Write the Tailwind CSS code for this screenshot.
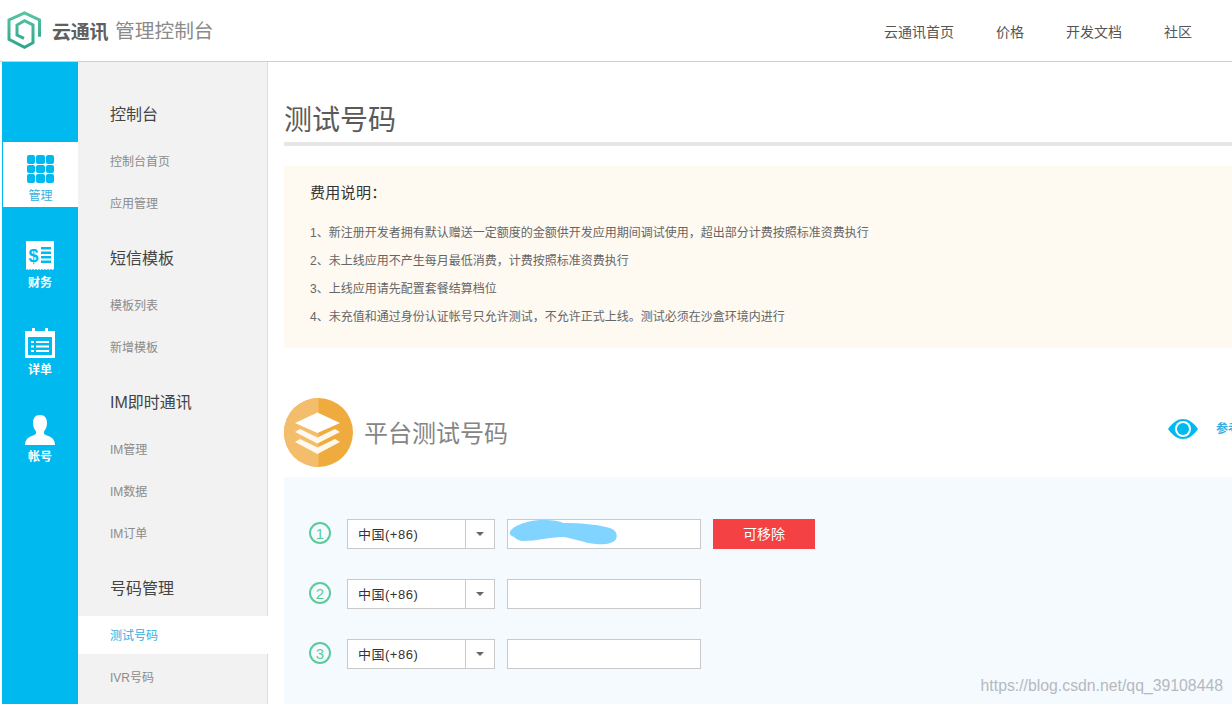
<!DOCTYPE html>
<html lang="zh-CN">
<head>
  <meta charset="UTF-8">
  <title>测试号码</title>
  <script src="https://cdn.jsdelivr.net/npm/@tailwindcss/browser@4"></script>
</head>
<body class="h-[704px] w-[1232px] overflow-hidden bg-white font-['Liberation_Sans','Noto_Sans_CJK_SC',sans-serif]">
  <!-- Header -->
  <header class="flex h-[62px] items-center justify-between border-b border-[#cfcfcf] pr-[40px]">
    <div class="flex items-center pl-[7px]">
      <svg class="h-[40px] w-[34px]" viewBox="0 0 34 40" fill="none">
        <defs><linearGradient id="lg" x1="0" y1="0" x2="0" y2="1"><stop offset="0" stop-color="#55c4a2"/><stop offset="1" stop-color="#2fa58c"/></linearGradient></defs>
        <path d="M32.500 25.700V9L17.500 2 2 9V28.300L17.500 36.300 26 31.700V14L17.500 9.700 10 14V24L17 27.300" stroke="url(#lg)" stroke-width="3"/>
      </svg>
      <span class="ml-[11px] pt-[3px] text-[19px] leading-none font-bold tracking-[-0.3px] text-[#5f5f5f]">云通讯</span>
      <span class="ml-[7px] pt-[3px] text-[19.700px] leading-none text-[#8a8a8a]">管理控制台</span>
    </div>
    <nav class="flex gap-[42px] pt-[3px] text-[14px] text-[#555]">
      <a>云通讯首页</a>
      <a>价格</a>
      <a>开发文档</a>
      <a>社区</a>
    </nav>
  </header>

  <div class="flex h-[642px]">
    <!-- Icon rail -->
    <aside class="ml-[2px] w-[76px] shrink-0 bg-[#00b9ef] pt-[80px] text-center text-[12px] font-bold text-white">
      <div class="flex h-[65px] flex-col items-center border-l border-[#00b9ef] bg-white pt-[13px] font-normal text-[#35aee2]">
        <div class="grid grid-cols-3 gap-[1px]">
          <i class="h-[8.500px] w-[8.500px] rounded-[2px] bg-[#00b9ef]"></i><i class="h-[8.500px] w-[8.500px] rounded-[2px] bg-[#00b9ef]"></i><i class="h-[8.500px] w-[8.500px] rounded-[2px] bg-[#00b9ef]"></i>
          <i class="h-[8.500px] w-[8.500px] rounded-[2px] bg-[#00b9ef]"></i><i class="h-[8.500px] w-[8.500px] rounded-[2px] bg-[#00b9ef]"></i><i class="h-[8.500px] w-[8.500px] rounded-[2px] bg-[#00b9ef]"></i>
          <i class="h-[8.500px] w-[8.500px] rounded-[2px] bg-[#00b9ef]"></i><i class="h-[8.500px] w-[8.500px] rounded-[2px] bg-[#00b9ef]"></i><i class="h-[8.500px] w-[8.500px] rounded-[2px] bg-[#00b9ef]"></i>
        </div>
        <span class="mt-[4px] leading-[18px]">管理</span>
      </div>
      <div class="mt-[31px] flex h-[87px] flex-col items-center pt-[3px]">
        <svg class="h-[29px] w-[28px]" viewBox="0 0 28 29">
          <path d="M0 1 Q0 0 1 0 H27 Q28 0 28 1 V28 L26.500 29 L25 28 L23.500 29 L22 28 L20.500 29 L19 28 L17.500 29 L16 28 L14.500 29 L13 28 L11.500 29 L10 28 L8.500 29 L7 28 L5.500 29 L4 28 L2.500 29 L1 28 L0 29 Z" fill="#fff"/>
          <path d="M15 6h10v2.400H15zM15 10.500h10v2.400H15zM15 15h10v2.400H15zM15 19.500h10v2.400H15z" fill="#00b9ef"/>
          <text x="7.500" y="21" text-anchor="middle" font-size="18" font-weight="700" fill="#00b9ef" font-family="Liberation Sans">$</text>
        </svg>
        <span class="mt-[4px] leading-[18px]">财务</span>
      </div>
      <div class="flex h-[87px] flex-col items-center pt-[3px]">
        <svg class="h-[30px] w-[30px]" viewBox="0 0 30 30" fill="none">
          <path d="M1.500 5h27v23.500h-27z" stroke="#fff" stroke-width="3"/>
          <path d="M0 3h30v6H0z" fill="#fff"/>
          <path d="M7 0h3v5H7zM20 0h3v5h-3z" fill="#fff"/>
          <path d="M6 13h3v2H6zM11 13h13v2H11zM6 17.500h3v2H6zM11 17.500h13v2H11zM6 22h3v2H6zM11 22h13v2H11z" fill="#fff"/>
        </svg>
        <span class="mt-[3px] leading-[18px]">详单</span>
      </div>
      <div class="flex flex-col items-center pt-[3px]">
        <svg class="h-[30px] w-[30px]" viewBox="0 0 30 30">
          <path d="M15 0c5 0 7 3.500 7 8 0 3-1 6-3 8.500-.5 2 .5 3 3 4 4 1.500 8 3.500 8 9.500H0c0-6 4-8 8-9.500 2.500-1 3.500-2 3-4C9 14 8 11 8 8c0-4.500 2-8 7-8z" fill="#fff"/>
        </svg>
        <span class="mt-[3px] leading-[18px]">帐号</span>
      </div>
    </aside>

    <!-- Secondary menu -->
    <aside class="w-[190px] shrink-0 border-r border-[#dcdcdc] bg-[#f2f2f2] pt-[32px] text-[#8b8b8b]">
      <h3 class="pl-[32px] text-[16px] leading-[42px] text-[#444]">控制台</h3>
      <p class="mt-[5px] pl-[32px] text-[12px] leading-[42px]">控制台首页</p>
      <p class="pl-[32px] text-[12px] leading-[42px]">应用管理</p>
      <h3 class="mt-[10px] pl-[32px] text-[16px] leading-[48px] text-[#444]">短信模板</h3>
      <p class="mt-[2px] pl-[32px] text-[12px] leading-[42px]">模板列表</p>
      <p class="pl-[32px] text-[12px] leading-[42px]">新增模板</p>
      <h3 class="mt-[10px] pl-[32px] text-[16px] leading-[48px] text-[#444]">IM即时通讯</h3>
      <p class="mt-[2px] pl-[32px] text-[12px] leading-[42px]">IM管理</p>
      <p class="pl-[32px] text-[12px] leading-[42px]">IM数据</p>
      <p class="pl-[32px] text-[12px] leading-[42px]">IM订单</p>
      <h3 class="mt-[10px] pl-[32px] text-[16px] leading-[48px] text-[#444]">号码管理</h3>
      <p class="mt-[3px] -mr-[2px] h-[38px] bg-white pl-[32px] text-[12px] leading-[40px] text-[#35aee2]">测试号码</p>
      <p class="mt-[3px] pl-[32px] text-[12px] leading-[42px]">IVR号码</p>
    </aside>

    <!-- Main -->
    <main class="min-w-0 flex-1 pl-[16px]">
      <div class="h-[84px] border-b-[4px] border-[#e6e6e6] pt-[39px]">
        <h1 class="text-[28px] leading-[40px] text-[#5a5a5a]">测试号码</h1>
      </div>
      <section class="mt-[20px] h-[182px] bg-[#fef9f1] pt-[17px] pl-[26px]">
        <h2 class="text-[15px] leading-[20px] tracking-[0.3px] text-[#333]">费用说明：</h2>
        <ul class="mt-[16px] text-[12px] leading-[28px] text-[#666]">
          <li>1、新注册开发者拥有默认赠送一定额度的金额供开发应用期间调试使用，超出部分计费按照标准资费执行</li>
          <li>2、未上线应用不产生每月最低消费，计费按照标准资费执行</li>
          <li>3、上线应用请先配置套餐结算档位</li>
          <li>4、未充值和通过身份认证帐号只允许测试，不允许正式上线。测试必须在沙盒环境内进行</li>
        </ul>
      </section>

      <div class="relative mt-[50px] flex h-[68px] items-center">
        <svg class="h-[69px] w-[69px]" viewBox="0 0 69 69">
          <circle cx="34.500" cy="34.500" r="34.500" fill="#f0ab3f"/>
          <path d="M34.500 0A34.500 34.500 0 0 0 34.500 69z" fill="#f4bd6b"/>
          <path d="M33.500 14.500L56 25 33.500 35 11 25z" fill="#fff"/>
          <path d="M16 31L33.500 39.500 51 31 56 34 33.500 45.500 11 34z" fill="#fff" fill-opacity=".9"/>
          <path d="M16 41L33.500 49.500 51 41 56 44 33.500 56 11 44z" fill="#fff" fill-opacity=".9"/>
        </svg>
        <h2 class="ml-[11px] pt-[3px] text-[24px] text-[#858585]">平台测试号码</h2>
        <div class="absolute top-[21px] right-0 flex items-center">
          <svg class="h-[20px] w-[30px]" viewBox="0 0 30 20">
            <path d="M0 10C5 3 10 0 15 0s10 3 15 10c-5 7-10 10-15 10S5 17 0 10z" fill="#00b9ef"/>
            <circle cx="15" cy="10" r="8" fill="#fff"/>
            <circle cx="15" cy="10" r="6" fill="#00b9ef"/>
          </svg>
          <span class="ml-[18px] w-[16px] overflow-hidden text-[12px] font-bold whitespace-nowrap text-[#35aee2]">参考</span>
        </div>
      </div>

      <section class="mt-[11px] flex h-[240px] flex-col gap-[30px] bg-[#f5faff] pt-[42px] pl-[24px]">
        <div class="flex items-center">
          <span class="flex h-[22px] w-[22px] -translate-y-[1px] translate-x-[1px] items-center justify-center rounded-full border-2 border-[#5ccb9b] text-[15px] leading-none text-[#5ccb9b]">1</span>
          <div class="ml-[17px] flex h-[30px] w-[148px] border border-[#c9c9c9] bg-white text-[13px] text-[#333]">
            <span class="w-[118px] border-r border-[#c9c9c9] pl-[10px] leading-[30px] tracking-[0.5px]">中国(+86)</span>
            <span class="flex flex-1 items-center justify-center"><i class="border-x-[4px] border-t-[4px] border-x-transparent border-t-[#666]"></i></span>
          </div>
          <div class="relative ml-[12px] h-[30px] w-[194px] border border-[#c9c9c9] bg-white">
            <svg class="absolute top-0 left-0 h-[28px] w-[118px]" viewBox="0 0 118 28">
              <path d="M2 12C4 6 20 0 35 0 45 0 52 1 55 3 75 3 92 5 102 8 108 10 110 15 108 19 106 23 98 25 88 24 76 23 65 18 55 17 42 17 28 21 16 21 11 21 8 19 6 17 3 16 1 14 2 12Z" fill="#81d4ff"/>
            </svg>
          </div>
          <button class="ml-[12px] h-[30px] w-[102px] bg-[#f44144] text-[14px] text-white">可移除</button>
        </div>
        <div class="flex items-center">
          <span class="flex h-[22px] w-[22px] -translate-y-[1px] translate-x-[1px] items-center justify-center rounded-full border-2 border-[#5ccb9b] text-[15px] leading-none text-[#5ccb9b]">2</span>
          <div class="ml-[17px] flex h-[30px] w-[148px] border border-[#c9c9c9] bg-white text-[13px] text-[#333]">
            <span class="w-[118px] border-r border-[#c9c9c9] pl-[10px] leading-[30px] tracking-[0.5px]">中国(+86)</span>
            <span class="flex flex-1 items-center justify-center"><i class="border-x-[4px] border-t-[4px] border-x-transparent border-t-[#666]"></i></span>
          </div>
          <div class="ml-[12px] h-[30px] w-[194px] border border-[#c9c9c9] bg-white"></div>
        </div>
        <div class="flex items-center">
          <span class="flex h-[22px] w-[22px] -translate-y-[1px] translate-x-[1px] items-center justify-center rounded-full border-2 border-[#5ccb9b] text-[15px] leading-none text-[#5ccb9b]">3</span>
          <div class="ml-[17px] flex h-[30px] w-[148px] border border-[#c9c9c9] bg-white text-[13px] text-[#333]">
            <span class="w-[118px] border-r border-[#c9c9c9] pl-[10px] leading-[30px] tracking-[0.5px]">中国(+86)</span>
            <span class="flex flex-1 items-center justify-center"><i class="border-x-[4px] border-t-[4px] border-x-transparent border-t-[#666]"></i></span>
          </div>
          <div class="ml-[12px] h-[30px] w-[194px] border border-[#c9c9c9] bg-white"></div>
        </div>
      </section>
    </main>
  </div>

  <!-- Watermark -->
  <span class="absolute right-[9px] bottom-[10px] text-[15.800px] leading-none text-[#b5b9be]">https://blog.csdn.net/qq_39108448</span>
</body>
</html>
